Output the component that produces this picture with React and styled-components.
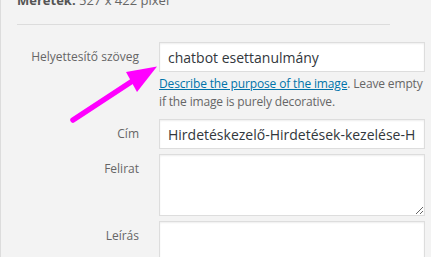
import React from 'react'
import styled, { createGlobalStyle } from 'styled-components'

const GlobalStyle = createGlobalStyle`
  html, body {
    margin: 0;
    background: #f3f3f3;
    font-family: 'Open Sans', 'Liberation Sans', sans-serif;
    color: #444;
  }
`

const Screen = styled.div`
  position: relative;
  height: 100vh;
  overflow: hidden;
`

const Panel = styled.div`
  margin-top: -9px;
  padding: 0 6px 0 16px;
  border-left: 1px solid #dcdcdc;
  min-height: 300px;
`

const Meta = styled.div`
  font-size: 13px;
  line-height: 18px;
  color: #666;

  strong {
    color: #555;
  }
`

const Divider = styled.hr`
  width: 373px;
  margin: 15px 0 0;
  border: 0;
  border-top: 1px solid #dcdcdc;
`

const Form = styled.div`
  display: grid;
  grid-template-columns: 122px 266px;
  column-gap: 20px;
  row-gap: 5px;
  margin-top: 17px;
`

const Label = styled.label`
  padding-top: 6px;
  font-size: 12px;
  line-height: 18px;
  text-align: right;
  color: #666;
  white-space: nowrap;
`

const TextInput = styled.input`
  box-sizing: border-box;
  width: 100%;
  height: 30px;
  margin: 0;
  padding: 0 8px;
  border: 1px solid #ddd;
  border-radius: 0;
  background: #fff;
  box-shadow: inset 0 1px 2px rgba(0, 0, 0, 0.07);
  font-family: inherit;
  font-size: 14px;
  color: #32373c;
  outline: none;
`

const TextArea = styled.textarea`
  box-sizing: border-box;
  display: block;
  width: 100%;
  height: ${(p) => p.$h}px;
  margin: 0;
  padding: 6px 8px;
  border: 1px solid #ddd;
  border-radius: 0;
  background: #fff;
  box-shadow: inset 0 1px 2px rgba(0, 0, 0, 0.07);
  font-family: inherit;
  font-size: 14px;
  resize: ${(p) => (p.$resize ? 'vertical' : 'none')};
  outline: none;
`

const Help = styled.p`
  grid-column: 2;
  margin: -2px 0 3px;
  font-size: 12px;
  letter-spacing: -0.15px;
  line-height: 18px;
  color: #666;

  a {
    color: #0073aa;
    text-decoration: underline;
  }
`

const Arrow = styled.svg`
  position: absolute;
  left: 0;
  top: 0;
  pointer-events: none;
`

export default function App() {
  return (
    <Screen>
      <GlobalStyle />
      <Panel>
        <Meta>
          <strong>Méretek:</strong> 527 x 422 pixel
        </Meta>
        <Divider />
        <Form>
          <Label>Helyettesítő szöveg</Label>
          <TextInput defaultValue='chatbot esettanulmány' />
          <Help>
            <a href='#'>Describe the purpose of the image</a>. Leave empty if
            the image is purely decorative.
          </Help>
          <Label>Cím</Label>
          <TextInput defaultValue='Hirdetéskezelő-Hirdetések-kezelése-Hirdetéskezelő' />
          <Label>Felirat</Label>
          <TextArea $h={62} $resize />
          <Label>Leírás</Label>
          <TextArea $h={62} />
        </Form>
      </Panel>
      <Arrow width='431' height='257' viewBox='0 0 431 257'>
        <line x1='73' y1='120' x2='134' y2='80' stroke='#ff00ff' strokeWidth='5.5' strokeLinecap='round' />
        <polygon points='126,72 157,66.5 137,92' fill='#ff00ff' />
      </Arrow>
    </Screen>
  )
}
